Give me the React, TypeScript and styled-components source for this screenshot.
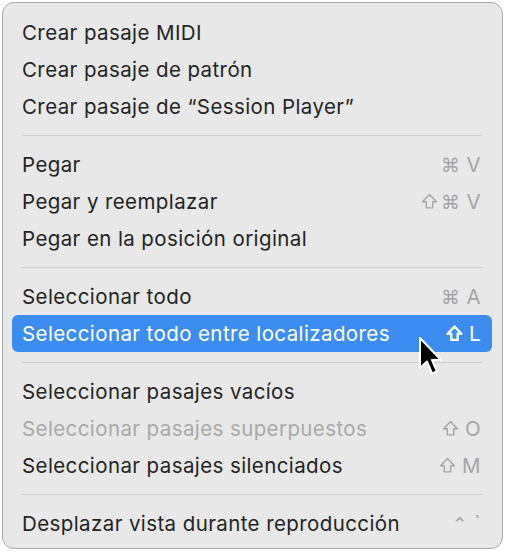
import React from 'react';
import styled, { createGlobalStyle } from 'styled-components';

const GlobalStyle = createGlobalStyle`
    html, body {
        margin: 0;
        padding: 0;
        background: #ffffff;
    }
    body {
        font-family: Inter, "Noto Sans", "DejaVu Sans", sans-serif;
    }
`

const Page = styled.div`
    width: 505px;
    height: 553px;
    padding: 2px 0 0 2px;
    box-sizing: border-box;
`

const Menu = styled.div`
    position: relative;
    width: 501px;
    height: 547px;
    box-sizing: border-box;
    padding: 11px 10px 0 9px;
    background: #e8e8e8;
    border: 1px solid #a9a9a9;
    border-radius: 12px;
    display: flex;
    flex-direction: column;
`

const Row = styled.div<{ $active?: boolean; $disabled?: boolean }>`
    display: flex;
    align-items: center;
    justify-content: space-between;
    height: 37px;
    flex-shrink: 0;
    padding: 0 11px 0 10px;
    border-radius: 6px;
    font-size: 20.5px;
    letter-spacing: 0.4px;
    background: ${p => (p.$active ? '#3d8df1' : 'transparent')};
    color: ${p => (p.$active ? '#ffffff' : p.$disabled ? '#a9a9a9' : '#242424')};
`

const Shortcut = styled.span<{ $active?: boolean }>`
    display: flex;
    align-items: center;
    gap: 6px;
    color: ${p => (p.$active ? '#ffffff' : '#a5a5a5')};
`

const Mods = styled.span`
    display: flex;
    align-items: center;
    gap: 3px;
`

const Key = styled.span`
    font-family: "DejaVu Sans", sans-serif;
    font-size: 19px;
`

const ShiftIcon = styled.svg`
    display: block;
`

const Separator = styled.div`
    height: 21px;
    flex-shrink: 0;
    display: flex;
    align-items: center;
    padding: 0 10px;

    &::after {
        content: '';
        flex: 1;
        height: 1px;
        background: #cdcdcd;
    }
`

const Cursor = styled.svg`
    position: absolute;
    left: 411px;
    top: 330px;
`

type Mod = 'shift' | 'cmd' | 'ctrl'
type Item = { label: string; mods?: Mod[]; key?: string; active?: boolean; disabled?: boolean } | 'sep'

const items: Item[] = [
    { label: 'Crear pasaje MIDI' },
    { label: 'Crear pasaje de patrón' },
    { label: 'Crear pasaje de “Session Player”' },
    'sep',
    { label: 'Pegar', mods: ['cmd'], key: 'V' },
    { label: 'Pegar y reemplazar', mods: ['shift', 'cmd'], key: 'V' },
    { label: 'Pegar en la posición original' },
    'sep',
    { label: 'Seleccionar todo', mods: ['cmd'], key: 'A' },
    { label: 'Seleccionar todo entre localizadores', mods: ['shift'], key: 'L', active: true },
    'sep',
    { label: 'Seleccionar pasajes vacíos' },
    { label: 'Seleccionar pasajes superpuestos', mods: ['shift'], key: 'O', disabled: true },
    { label: 'Seleccionar pasajes silenciados', mods: ['shift'], key: 'M' },
    'sep',
    { label: 'Desplazar vista durante reproducción', mods: ['ctrl'], key: '`' },
]

function Shift({ bold }: { bold?: boolean }) {
    return (
        <ShiftIcon width="17" height="17" viewBox="0 0 16 16">
            <path
                d="M8 1.5 L14.5 8.2 L11 8.2 L11 14 L5 14 L5 8.2 L1.5 8.2 Z"
                fill="none"
                stroke="currentColor"
                strokeWidth={bold ? 2.2 : 1.3}
                strokeLinejoin="round"
            />
        </ShiftIcon>
    )
}

function ModKey({ mod, active }: { mod: Mod; active?: boolean }) {
    if (mod === 'shift') return <Shift bold={active} />
    return <Key>{mod === 'cmd' ? '⌘' : '⌃'}</Key>
}

export default function App() {
    return (
        <Page>
            <GlobalStyle />
            <Menu>
                {items.map((item, i) =>
                    item === 'sep' ? (
                        <Separator key={i} />
                    ) : (
                        <Row key={i} $active={item.active} $disabled={item.disabled}>
                            <span>{item.label}</span>
                            {item.key && (
                                <Shortcut $active={item.active}>
                                    <Mods>
                                        {item.mods?.map(m => <ModKey key={m} mod={m} active={item.active} />)}
                                    </Mods>
                                    <span>{item.key}</span>
                                </Shortcut>
                            )}
                        </Row>
                    )
                )}
                <Cursor width="34" height="46" viewBox="0 0 34 46">
                    <path
                        d="M6 5 L6 35 L13 28.5 L18 40.5 L23 38.5 L18 27 L27 27 Z"
                        fill="#000"
                        stroke="#fff"
                        strokeWidth="2"
                        strokeLinejoin="round"
                    />
                </Cursor>
            </Menu>
        </Page>
    )
}
